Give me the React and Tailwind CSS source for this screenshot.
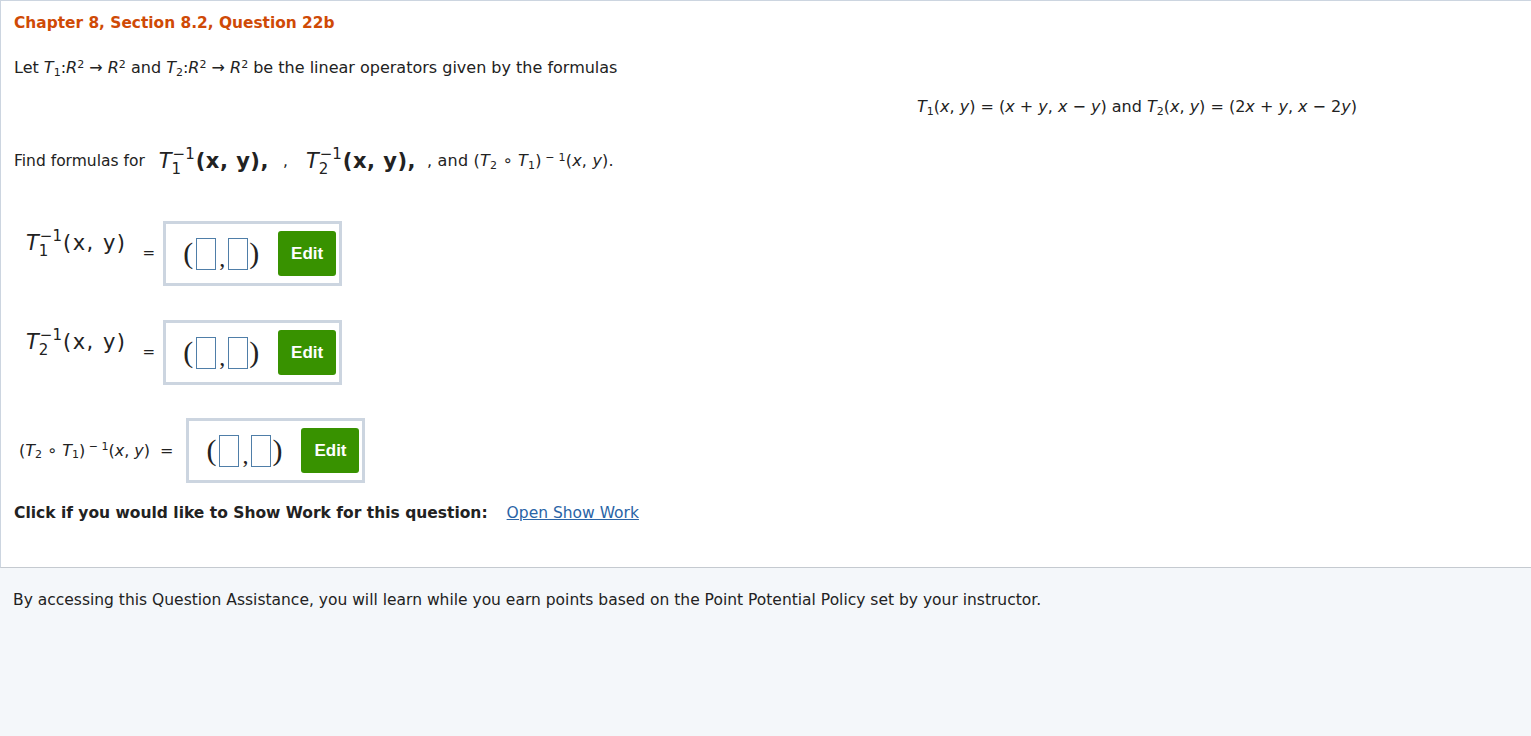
import React from 'react';

const body = { fontFamily: '"DejaVu Sans", Verdana, sans-serif' };
const serif = { fontFamily: '"Liberation Serif", "Times New Roman", serif' };
const arial = { fontFamily: '"Liberation Sans", Arial, sans-serif' };

// T with stacked sub/superscript, like the rendered math images
const TInv = ({ sub, bold }) => (
  <span className="inline-flex items-start text-[#222]" style={body}>
    <span className="italic text-[21px] leading-[24px] mt-[2px]">T</span>
    <span className="flex flex-col items-start text-[15px] leading-[15px] ml-[1px]">
      <span>−1</span>
      <span className="-ml-[1px]">{sub}</span>
    </span>
    <span
      className={`text-[21px] leading-[24px] mt-[2px] ml-[1px] ${
        bold ? 'font-bold tracking-[0.5px]' : 'tracking-[1.5px]'
      }`}
    >
      {bold ? '(x, y),' : '(x, y)'}
    </span>
  </span>
);

const Sub = ({ children }) => <sub className="text-[11px]">{children}</sub>;
const Sup = ({ children }) => <sup className="text-[11px]">{children}</sup>;

const AnswerBox = () => (
  <div className="flex items-center h-[65px] border-[3px] border-[#ccd5e0] bg-white pl-[17px] pr-[3px]">
    <div className="flex items-center text-[30px] leading-[32px] text-[#222]" style={serif}>
      <span className="-mt-[2px]">(</span>
      <span className="w-[20px] h-[32px] border border-[#4f7ea8] ml-[3px]" />
      <span className="text-[24px] mt-[8px] mx-[3px]">,</span>
      <span className="w-[20px] h-[32px] border border-[#4f7ea8]" />
      <span className="-mt-[2px] ml-[1px]">)</span>
    </div>
    <button
      className="ml-[19px] w-[58px] h-[45px] rounded-[3px] bg-[#389200] text-white font-bold text-[17px]"
      style={arial}
    >
      Edit
    </button>
  </div>
);

export default function App() {
  return (
    <div className="w-[1531px] h-[736px] bg-[#f4f7fa] text-[#222]" style={body}>
      <div className="bg-white border-l border-t border-[#ccd5e0] h-[568px] pl-[13px] pt-[12px] border-b border-b-[#c5cad0]">
        <h2 className="text-[15.4px] font-bold text-[#cf4a06] leading-[20px]">
          Chapter 8, Section 8.2, Question 22b
        </h2>

        <p className="mt-[25px] text-[16px] leading-[20px]">
          Let <i>T</i><Sub>1</Sub>:<i>R</i><Sup>2</Sup> → <i>R</i><Sup>2</Sup> and <i>T</i><Sub>2</Sub>:<i>R</i>
          <Sup>2</Sup> → <i>R</i><Sup>2</Sup> be the linear operators given by the formulas
        </p>

        <div className="flex justify-end pr-[174px] mt-[19px] text-[16px] leading-[20px]">
          <span>
            <i>T</i><Sub>1</Sub>(<i>x</i>, <i>y</i>) = (<i>x</i> + <i>y</i>, <i>x</i> − <i>y</i>) and <i>T</i>
            <Sub>2</Sub>(<i>x</i>, <i>y</i>) = (2<i>x</i> + <i>y</i>, <i>x</i> − 2<i>y</i>)
          </span>
        </div>

        <div className="flex items-end mt-[30px] text-[15.5px] leading-[20px]">
          <span>Find formulas for</span>
          <span className="ml-[14px] mb-[-6px]"><TInv sub="1" bold /></span>
          <span className="ml-[14px]">,</span>
          <span className="ml-[18px] mb-[-6px]"><TInv sub="2" bold /></span>
          <span className="ml-[11px] text-[16px] tracking-[0.2px]">
            , and (<i>T</i><Sub>2</Sub> ∘ <i>T</i><Sub>1</Sub>)<Sup> − 1</Sup>(<i>x</i>, <i>y</i>).
          </span>
        </div>

        <div className="flex items-center mt-[50px]">
          <span className="ml-[12px] -mt-[20px]"><TInv sub="1" /></span>
          <span className="ml-[16px] text-[15px]">=</span>
          <span className="ml-[8px]"><AnswerBox /></span>
        </div>

        <div className="flex items-center mt-[34px]">
          <span className="ml-[12px] -mt-[20px]"><TInv sub="2" /></span>
          <span className="ml-[16px] text-[15px]">=</span>
          <span className="ml-[8px]"><AnswerBox /></span>
        </div>

        <div className="flex items-center mt-[33px] text-[16px]">
          <span className="ml-[5px]">
            (<i>T</i><Sub>2</Sub> ∘ <i>T</i><Sub>1</Sub>)<Sup> − 1</Sup>(<i>x</i>, <i>y</i>)
          </span>
          <span className="ml-[10px]">=</span>
          <span className="ml-[13px]"><AnswerBox /></span>
        </div>

        <div className="flex items-center mt-[20px] text-[15.5px] leading-[20px]">
          <span className="font-bold">Click if you would like to Show Work for this question:</span>
          <a href="#" className="ml-[19px] text-[#2a64a6] underline">Open Show Work</a>
        </div>
      </div>

      <p className="pl-[13px] pt-[22px] text-[15.5px] leading-[20px]">
        By accessing this Question Assistance, you will learn while you earn points based on the Point Potential Policy set by your instructor.
      </p>
    </div>
  );
}
